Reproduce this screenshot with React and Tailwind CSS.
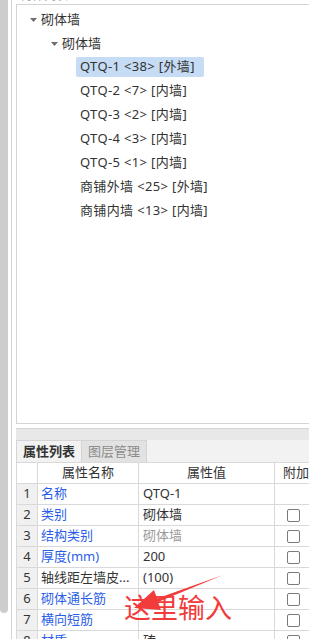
const font = "font-['Noto_Sans','Noto_Sans_CJK_SC',sans-serif]";

const items = [
  { name: "QTQ-1 <38> [外墙]", active: true },
  { name: "QTQ-2 <7> [内墙]" },
  { name: "QTQ-3 <2> [内墙]" },
  { name: "QTQ-4 <3> [内墙]" },
  { name: "QTQ-5 <1> [内墙]" },
  { name: "商铺外墙 <25> [外墙]" },
  { name: "商铺内墙 <13> [内墙]" },
];

const rows = [
  { n: 1, name: "名称", value: "QTQ-1", blue: true, noCheck: true },
  { n: 2, name: "类别", value: "砌体墙", blue: true },
  { n: 3, name: "结构类别", value: "砌体墙", blue: true, muted: true },
  { n: 4, name: "厚度(mm)", value: "200", blue: true },
  { n: 5, name: "轴线距左墙皮...", value: "(100)" },
  { n: 6, name: "砌体通长筋", value: "", blue: true },
  { n: 7, name: "横向短筋", value: "", blue: true },
  { n: 8, name: "材质", value: "砖", blue: true },
];

const Caret = () => (
  <svg width="7" height="4" viewBox="0 0 7 4" className="shrink-0">
    <path d="M0 0 H7 L3.5 4 Z" fill="#6f6f6f" />
  </svg>
);

export default function App() {
  return (
    <div className={`relative w-[309px] h-[639px] overflow-hidden bg-white flex text-[13px] text-[#333] ${font}`}>
      {/* left scroll strip */}
      <div className="w-[8px] h-[613px] bg-[#cdcdcd] rounded-b-[4px] shrink-0" />
      <div className="w-[3px] shrink-0" />
      <div className="w-px bg-[#d4d4d4] shrink-0" />
      <div className="w-[4px] shrink-0" />

      <div className="flex-1 flex flex-col min-w-0">
        {/* cut-off title */}
        <div className="h-[4px] overflow-hidden shrink-0">
          <div className="mt-[-12px] pl-[4px] text-[12px] text-[#aaa] leading-[16px]">构件列表</div>
        </div>

        {/* tree panel */}
        <div className="h-[420px] border-t border-l border-b border-[#d4d4d4] pt-[3px] shrink-0">
          <div className="h-[24px] flex items-center pl-[13px] gap-[4px]">
            <Caret />
            <span>砌体墙</span>
          </div>
          <div className="h-[23px] flex items-center pl-[34px] gap-[4px]">
            <Caret />
            <span>砌体墙</span>
          </div>
          {items.map((it) => (
            <div key={it.name} className="h-[24px] flex items-center pl-[59px]">
              <div
                className={`h-[20px] flex items-center px-[4px] rounded-[2px] whitespace-pre tracking-[0.35px] ${
                  it.active ? "bg-[#c6dcf4] w-[128px]" : ""
                }`}
              >
                {it.name}
              </div>
            </div>
          ))}
        </div>

        <div className="h-[4px] shrink-0" />

        {/* panel title bar */}
        <div className="h-[12px] bg-[#e8e8e8] border-t border-[#d4d4d4] shrink-0" />

        {/* tabs */}
        <div className="h-[22px] bg-[#f2f2f2] flex shrink-0 border-l border-[#d4d4d4]">
          <div className="w-[65px] flex items-center justify-center font-bold text-[#333] border-r border-t border-[#d4d4d4] bg-[#f2f2f2]">
            属性列表
          </div>
          <div className="w-[65px] flex items-center justify-center text-[#8c8c8c] bg-[#e2e2e2] border-r border-t border-[#d4d4d4]">
            图层管理
          </div>
        </div>

        {/* property table */}
        <div className="border-l border-t border-[#d9d9d9] shrink-0">
          <div className="flex h-[21px] border-b border-[#d9d9d9]">
            <div className="w-[21px] border-r border-[#d9d9d9] bg-white shrink-0" />
            <div className="w-[101px] border-r border-[#d9d9d9] flex items-center justify-center shrink-0">属性名称</div>
            <div className="w-[136px] border-r border-[#d9d9d9] flex items-center justify-center shrink-0">属性值</div>
            <div className="flex-1 flex items-center pl-[8px] whitespace-nowrap overflow-hidden">附加</div>
          </div>
          {rows.map((r) => (
            <div key={r.n} className="flex h-[21px] border-b border-[#d9d9d9]">
              <div className="w-[21px] border-r border-[#d9d9d9] bg-[#f0f0f0] flex items-center justify-center shrink-0">
                {r.n}
              </div>
              <div
                className={`w-[101px] border-r border-[#d9d9d9] flex items-center pl-[3px] whitespace-nowrap overflow-hidden shrink-0 ${
                  r.blue ? "text-[#2a5ee8]" : "text-[#333]"
                }`}
              >
                {r.name}
              </div>
              <div
                className={`w-[136px] border-r border-[#d9d9d9] flex items-center pl-[4px] shrink-0 ${
                  r.muted ? "text-[#9a9a9a]" : "text-[#333]"
                }`}
              >
                {r.value}
              </div>
              <div className="flex-1 flex items-center pl-[12px]">
                {!r.noCheck && (
                  <div className="w-[13px] h-[13px] border border-[#7a7a7a] rounded-[2px] bg-white" />
                )}
              </div>
            </div>
          ))}
        </div>
      </div>

      {/* red annotation */}
      <svg className="absolute left-0 top-0 pointer-events-none" width="309" height="639">
        <polygon
          points="223,575 157,598.5 154,590 134,608 161,610 158,602"
          fill="#f23b3b"
        />
      </svg>
      <div className="absolute left-[124px] top-[591px] text-[27px] leading-[34px] text-[#f23b3b] whitespace-nowrap">
        这里输入
      </div>
    </div>
  );
}
